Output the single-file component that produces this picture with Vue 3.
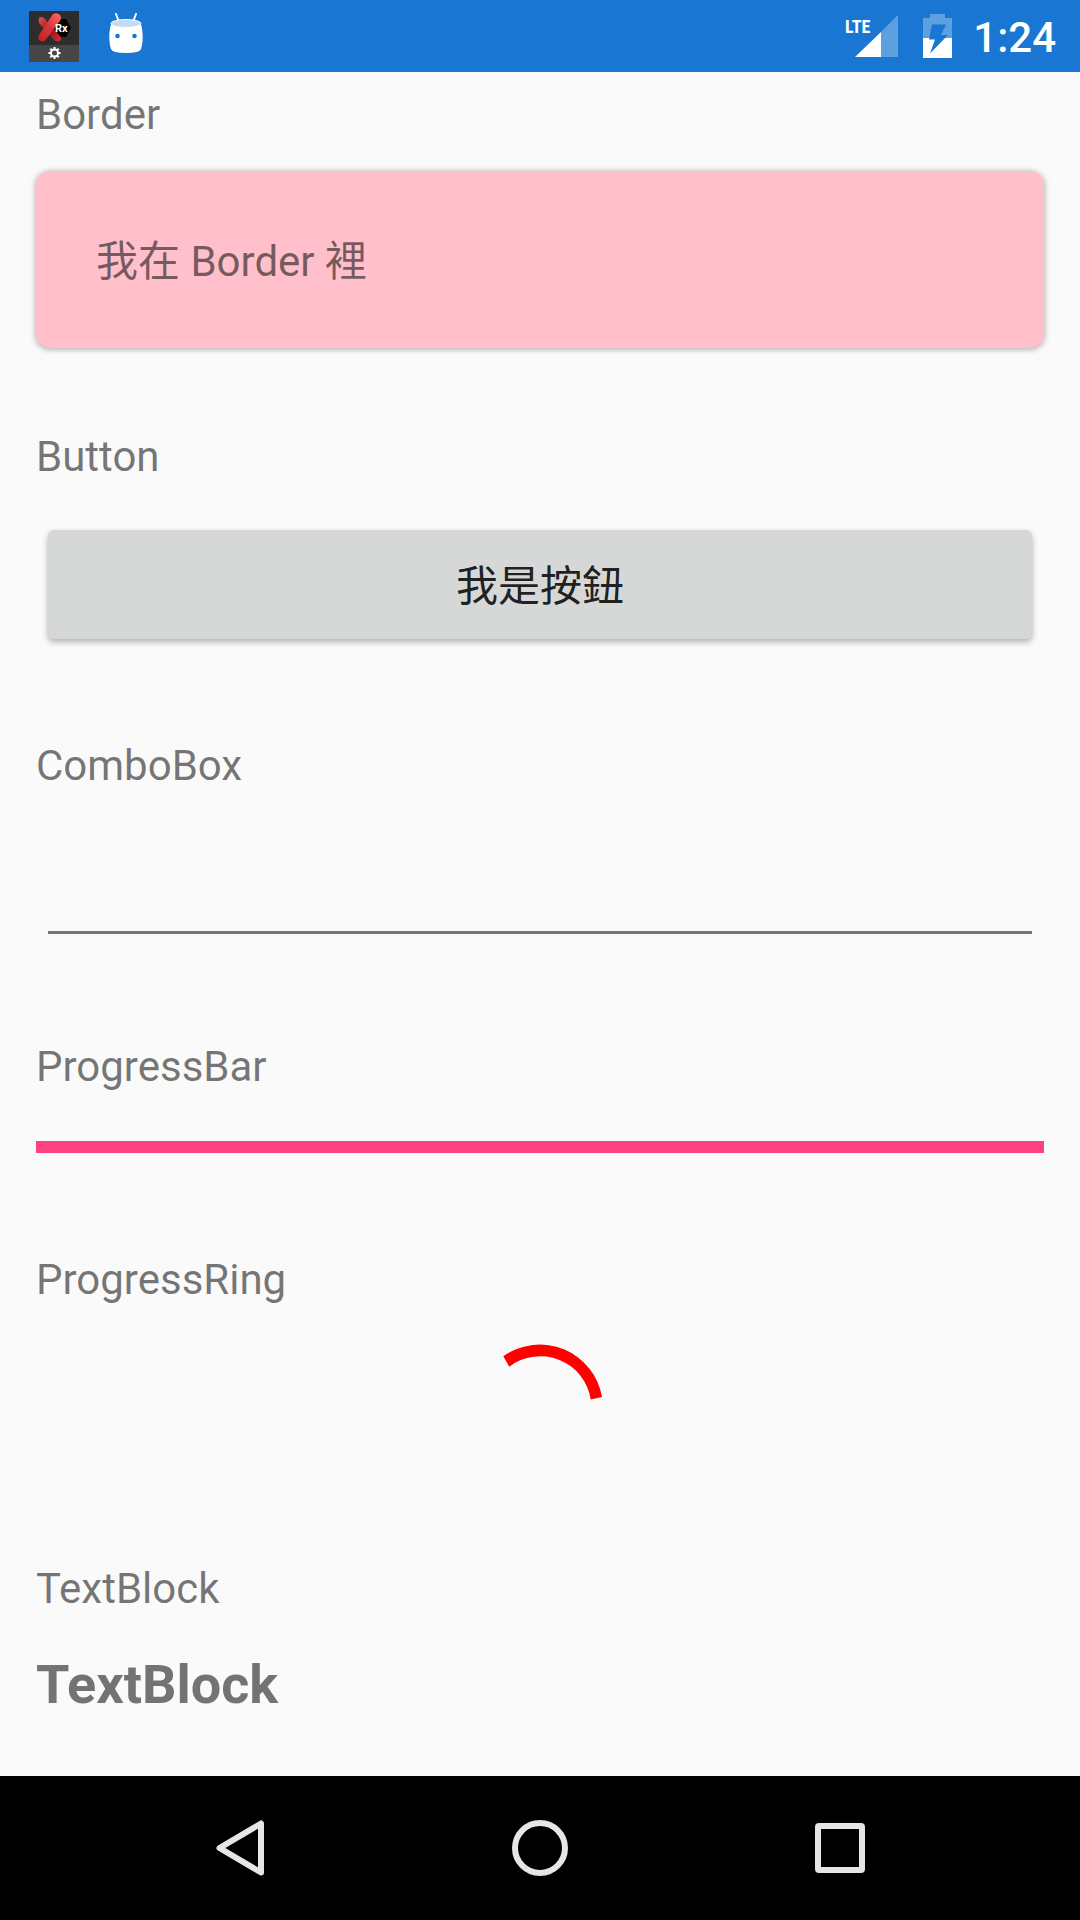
<script setup>
import { ref } from 'vue'

const selected = ref('')
const progress = ref(100)
</script>

<template>
  <div class="screen">
    <header class="status-bar">
      <div class="status-group">
        <svg class="app-icon" width="50" height="51" viewBox="0 0 50 51" aria-hidden="true">
          <defs>
            <linearGradient id="redA" x1="0" y1="0" x2="1" y2="1">
              <stop offset="0" stop-color="#f0504c" />
              <stop offset="0.5" stop-color="#8e1518" />
              <stop offset="1" stop-color="#e02a2c" />
            </linearGradient>
            <linearGradient id="redB" x1="1" y1="0" x2="0" y2="1">
              <stop offset="0" stop-color="#ff6a66" />
              <stop offset="0.5" stop-color="#d8373a" />
              <stop offset="1" stop-color="#d01c20" />
            </linearGradient>
          </defs>
          <rect width="50" height="51" fill="#2d2d2d" />
          <rect y="34" width="50" height="17" fill="#464646" />
          <path d="M29 8h8l5 9-5 9h-8l-5-9z" fill="#000" />
          <path d="M10 7q2-2 5 0L31 25q2 2 1 4-3 3-7 0L10 12q-1-3 0-5z" fill="url(#redA)" />
          <path d="M24 3q4-2 7 1 2 3 0 6L17 28q-2 3-5 2-4-1-2-6z" fill="url(#redB)" />
          <text x="26" y="21" class="rx">Rx</text>
          <circle cx="25.500" cy="42" r="3.500" fill="none" stroke="#fff" stroke-width="2" />
          <g stroke="#fff" stroke-width="2">
            <path d="M25.500 36v3M25.500 45v3M19.500 42h3M28.500 42h3M21.300 37.800l2 2M27.700 44.200l2 2M29.700 37.800l-2 2M23.300 44.200l-2 2" />
          </g>
        </svg>
        <svg class="robot-icon" width="34" height="41" viewBox="0 0 34 41" aria-hidden="true">
          <path d="M7 1l3 8M27 1l-3 8" stroke="#fff" stroke-width="2" stroke-linecap="round" />
          <path d="M2 11C-.5 20 0 30 2 36q1 4 15 4t15-4c2-6 2.500-16 0-25z" fill="#fff" />
          <ellipse cx="17" cy="10.500" rx="15" ry="4" fill="#c5daf4" stroke="#fff" stroke-width="1" />
          <circle cx="8.500" cy="23" r="2.300" fill="#1976d2" />
          <circle cx="25.500" cy="23" r="2.300" fill="#1976d2" />
        </svg>
      </div>
      <div class="status-group">
        <svg class="signal-icon" width="54" height="44" viewBox="0 0 54 44" role="img" aria-label="LTE signal">
          <path d="M54 1v42H37V18z" fill="#5e9fe0" />
          <path d="M37 18v25H11z" fill="#fff" />
          <text x="1" y="19" class="lte">LTE</text>
        </svg>
        <svg class="battery-icon" width="29" height="44" viewBox="0 0 29 44" role="img" aria-label="Battery charging">
          <path d="M7 0h15v4h7v20H0V4h7z" fill="#5e9fe0" />
          <path d="M0 24h29v20H0z" fill="#fff" />
          <path d="M9 10.500h14l-5 10.500h7L7 39.500 12 25.500H6z" fill="#1976d2" />
        </svg>
        <time class="clock">1:24</time>
      </div>
    </header>

    <main class="content">
      <section class="block">
        <h2 class="label">Border</h2>
        <div class="card">我在 Border 裡</div>
      </section>

      <section class="block">
        <h2 class="label">Button</h2>
        <button type="button" class="action">我是按鈕</button>
      </section>

      <section class="block">
        <label class="label" for="combo">ComboBox</label>
        <select id="combo" v-model="selected" class="combo">
          <option value=""></option>
        </select>
      </section>

      <section class="block">
        <label class="label" for="bar">ProgressBar</label>
        <progress id="bar" class="bar" :value="progress" max="100"></progress>
      </section>

      <section class="block">
        <h2 class="label">ProgressRing</h2>
        <svg class="ring" width="144" height="144" viewBox="0 0 144 144" role="progressbar" aria-label="Loading">
          <path d="M35.300 20.300A63 63 0 0 1 134 61L122.700 63.500A51 51 0 0 0 41.300 30.700z" fill="#f00" />
        </svg>
      </section>

      <section class="block">
        <h2 class="label">TextBlock</h2>
        <p class="strong-text">TextBlock</p>
      </section>
    </main>

    <nav class="nav-bar">
      <button type="button" class="nav-button" aria-label="Back">
        <svg width="60" height="60" viewBox="0 0 60 60">
          <path d="M51 5.500v49L9.500 30z" fill="none" stroke="#e6e6e6" stroke-width="6" stroke-linejoin="round" />
        </svg>
      </button>
      <button type="button" class="nav-button" aria-label="Home">
        <svg width="60" height="60" viewBox="0 0 60 60">
          <circle cx="30" cy="30" r="25" fill="none" stroke="#e6e6e6" stroke-width="6" />
        </svg>
      </button>
      <button type="button" class="nav-button" aria-label="Overview">
        <svg width="60" height="60" viewBox="0 0 60 60">
          <rect x="8" y="8" width="44" height="44" rx="1" fill="none" stroke="#e6e6e6" stroke-width="6" stroke-linejoin="round" />
        </svg>
      </button>
    </nav>
  </div>
</template>

<style>
body {
  margin: 0;
  background: #fafafa;
}
</style>

<style scoped>
.screen {
  display: flex;
  flex-direction: column;
  min-height: 100vh;
  background: #fafafa;
  color: rgba(0, 0, 0, 0.54);
  font-family: Roboto, "Noto Sans CJK TC", sans-serif;
  font-size: 42px;
  line-height: 50px;
}

.status-bar {
  display: flex;
  justify-content: space-between;
  align-items: center;
  height: 72px;
  padding: 0 24px 0 29px;
  background: #1976d2;
  color: #fff;
}

.status-group {
  display: flex;
  align-items: center;
}

.status-group svg {
  display: block;
}

.robot-icon {
  margin: 0 0 6px 30px;
}

.rx {
  fill: #fff;
  font-size: 11px;
  font-weight: 700;
}

.lte {
  fill: #fff;
  font-family: "Roboto Condensed", "Liberation Sans Narrow", Roboto, sans-serif;
  font-size: 18px;
  font-weight: 700;
}

.battery-icon {
  margin: 0 21px 0 25px;
}

.clock {
  padding-top: 4px;
  font-weight: 500;
}

.content {
  display: flex;
  flex: 1;
  flex-direction: column;
  gap: 84px;
  padding: 18px 36px 48px;
}

.block {
  display: flex;
  flex-direction: column;
  gap: 31px;
}

.label {
  margin: 0;
  font-size: 42px;
  font-weight: 400;
}

.card {
  padding: 66px 60px 61px;
  border-radius: 14px;
  background: #ffc0cb;
  box-shadow: 0 1px 6px rgba(0, 0, 0, 0.36);
}

.action {
  margin: 17px 12px 18px;
  padding: 32px 24px 27px;
  border: 0;
  border-radius: 6px;
  background: #d6d8d7;
  box-shadow: 0 3px 6px rgba(0, 0, 0, 0.3);
  color: rgba(0, 0, 0, 0.87);
  font: inherit;
}

.combo {
  appearance: none;
  height: 112px;
  margin: 0 12px 24px;
  padding: 0;
  border: 0;
  border-bottom: 3px solid #757575;
  border-radius: 0;
  background: transparent;
  color: inherit;
  font: inherit;
}

.bar {
  appearance: none;
  display: block;
  width: 100%;
  height: 12px;
  margin: 18px 0;
  border: 0;
  background: transparent;
}

.bar::-webkit-progress-bar {
  background: transparent;
}

.bar::-webkit-progress-value {
  background: #ff4081;
}

.ring {
  align-self: center;
}

.strong-text {
  margin: 0;
  font-size: 54px;
  font-weight: 700;
  line-height: 80px;
}

.nav-bar {
  display: grid;
  grid-template-columns: repeat(3, 1fr);
  height: 144px;
  padding: 0 90px;
  background: #000;
}

.nav-button {
  display: flex;
  align-items: center;
  justify-content: center;
  padding: 0;
  border: 0;
  background: transparent;
}
</style>
